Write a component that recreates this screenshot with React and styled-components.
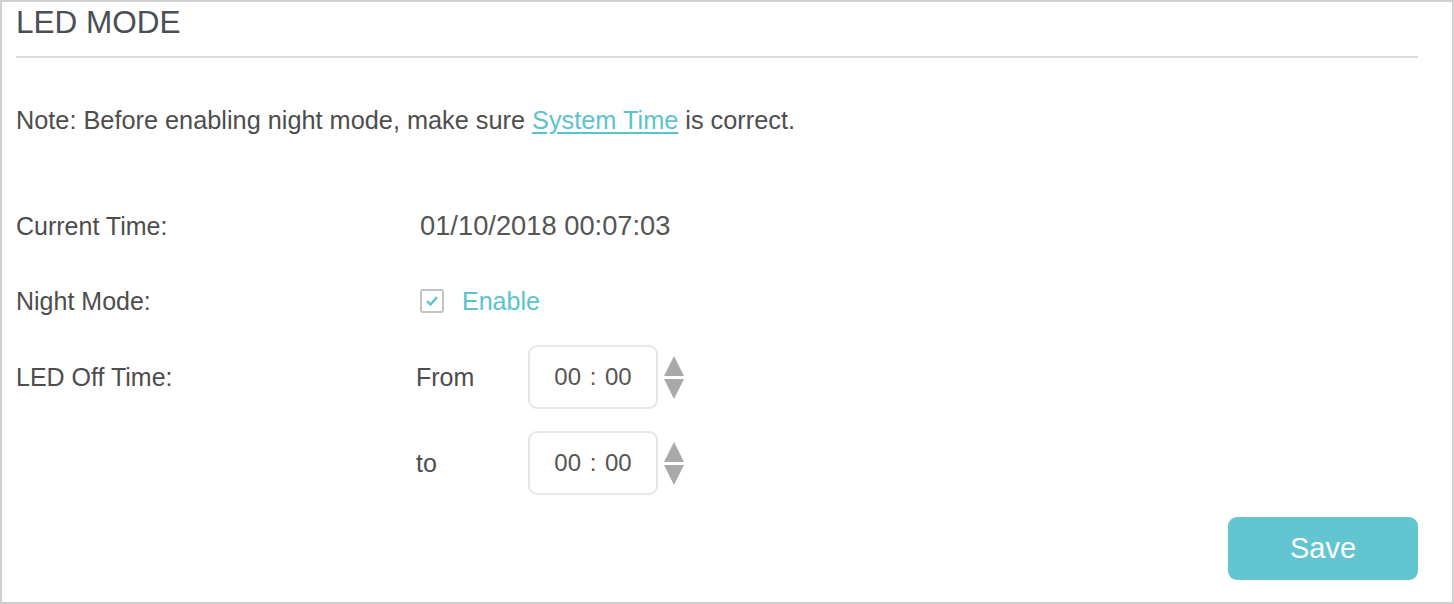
import React, { useState } from "react";
import styled, { createGlobalStyle } from "styled-components";

const GlobalStyle = createGlobalStyle`
  html, body {
    margin: 0;
    padding: 0;
    background: #ffffff;
  }
  body {
    font-family: "Liberation Sans", Arial, sans-serif;
    color: #4d4d4d;
  }
`;

const Frame = styled.div`
  box-sizing: border-box;
  width: 1454px;
  height: 604px;
  border: 2px solid #cfcfcf;
  padding: 0 34px 0 14px;
  background: #fff;
`;

const Header = styled.div`
  padding-bottom: 14px;
  border-bottom: 2px solid #dcdcdc;
`;

const Title = styled.h1`
  margin: 0;
  font-size: 31.5px;
  line-height: 40px;
  font-weight: normal;
  color: #4a4f55;
`;

const Note = styled.p`
  margin: 47px 0 0;
  font-size: 25.3px;
  line-height: 30px;
  color: #4d4d4d;
`;

const Link = styled.a`
  color: #5bc3cf;
  text-decoration: underline;
  text-underline-offset: 3px;
`;

const Row = styled.div`
  display: flex;
  align-items: center;
  height: 64px;
  margin-top: ${(p) => p.$gap}px;
`;

const Label = styled.div`
  width: ${(p) => p.$width}px;
  flex: none;
  font-size: 25px;
  color: #4d4d4d;
`;

const Value = styled.div`
  font-size: 27.3px;
  color: #555;
  padding-left: 2px;
`;

const CheckLabel = styled.label`
  display: flex;
  align-items: center;
  gap: 18px;
  padding-left: 2px;
  font-size: 25px;
  color: #5bc3cf;
  cursor: pointer;
`;

const Box = styled.span`
  box-sizing: border-box;
  width: 24px;
  height: 24px;
  border: 2px solid #c4c4c4;
  border-radius: 3px;
  display: flex;
  align-items: center;
  justify-content: center;
`;

const TimeBox = styled.div`
  box-sizing: border-box;
  width: 130px;
  height: 64px;
  border: 2px solid #e6e6e6;
  border-radius: 9px;
  display: flex;
  align-items: center;
  justify-content: center;
  font-size: 24px;
  color: #555;
  word-spacing: 2px;
`;

const Spinner = styled.div`
  display: flex;
  flex-direction: column;
  gap: 3px;
  margin-left: 6px;
`;

const Footer = styled.div`
  display: flex;
  justify-content: flex-end;
  margin-top: 22px;
`;

const SaveButton = styled.button`
  width: 190px;
  height: 63px;
  border: none;
  border-radius: 9px;
  background: #63c5d0;
  color: #fff;
  font-family: "Liberation Sans", Arial, sans-serif;
  font-size: 29px;
  cursor: pointer;
`;

function Arrows() {
  return (
    <Spinner>
      <svg width="20" height="20" viewBox="0 0 20 20">
        <polygon points="10,0 20,20 0,20" fill="#a9a9a9" />
      </svg>
      <svg width="20" height="20" viewBox="0 0 20 20">
        <polygon points="0,0 20,0 10,20" fill="#a9a9a9" />
      </svg>
    </Spinner>
  );
}

function TimeField({ title, label, value, gap }) {
  return (
    <Row $gap={gap}>
      <Label $width={400}>{title}</Label>
      <Label $width={112}>{label}</Label>
      <TimeBox>{value}</TimeBox>
      <Arrows />
    </Row>
  );
}

export default function App() {
  const [night, setNight] = useState(true);

  return (
    <>
      <GlobalStyle />
      <Frame>
        <Header>
          <Title>LED MODE</Title>
        </Header>
        <Note>
          Note: Before enabling night mode, make sure{" "}
          <Link href="#">System Time</Link> is correct.
        </Note>
        <Row $gap={59}>
          <Label $width={402}>Current Time:</Label>
          <Value>01/10/2018 00:07:03</Value>
        </Row>
        <Row $gap={11}>
          <Label $width={402}>Night Mode:</Label>
          <CheckLabel onClick={() => setNight(!night)}>
            <Box>
              {night && (
                <svg width="14" height="12" viewBox="0 0 14 12">
                  <polyline
                    points="2,6 5.5,9.5 12,2"
                    fill="none"
                    stroke="#5bc3cf"
                    strokeWidth="2.4"
                  />
                </svg>
              )}
            </Box>
            Enable
          </CheckLabel>
        </Row>
        <TimeField title="LED Off Time:" label="From" value="00 : 00" gap={12} />
        <TimeField label="to" value="00 : 00" gap={22} />
        <Footer>
          <SaveButton>Save</SaveButton>
        </Footer>
      </Frame>
    </>
  );
}
